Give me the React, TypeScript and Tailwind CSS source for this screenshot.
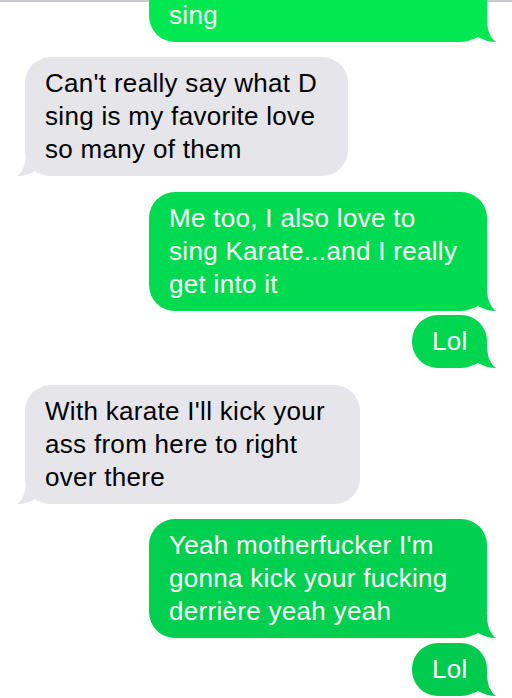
import React from "react";

type Msg = { from: "me" | "them"; lines: string[]; tone?: string; gap: string; w: string };

const messages: Msg[] = [
  { from: "them", lines: ["Can't really say what D", "sing is my favorite love", "so many of them"], gap: "mt-[15px]", w: "w-[323px]" },
  { from: "me", lines: ["Me too, I also love to", "sing Karate...and I really", "get into it"], tone: "#00da50", gap: "mt-[16px]", w: "w-[338px]" },
  { from: "me", lines: ["Lol"], tone: "#00d650", gap: "mt-[4px]", w: "w-[75px]" },
  { from: "them", lines: ["With karate I'll kick your", "ass from here to right", "over there"], gap: "mt-[17px]", w: "w-[335px]" },
  { from: "me", lines: ["Yeah motherfucker I'm", "gonna kick your fucking", "derrière yeah yeah"], tone: "#00cf50", gap: "mt-[15px]", w: "w-[338px]" },
  { from: "me", lines: ["Lol"], tone: "#00cb4f", gap: "mt-[5px]", w: "w-[75px]" },
];

function Tail({ from, color }: { from: "me" | "them"; color: string }) {
  if (from === "me") {
    return (
      <svg
        width="24"
        height="24"
        viewBox="0 0 24 24"
        className="absolute bottom-0 right-[-9px]"
        aria-hidden
      >
        <path d="M0 0 H15 C15 10 17 19 24 24 C18 24 11 22 6 19 C4 20 2 21 0 21 Z" fill={color} />
      </svg>
    );
  }
  return (
    <svg
      width="24"
      height="24"
      viewBox="0 0 24 24"
      className="absolute bottom-0 left-[-8px]"
      aria-hidden
    >
      <path d="M24 0 H9 C9 10 7 19 0 24 C6 24 13 22 18 19 C20 20 22 21 24 21 Z" fill={color} />
    </svg>
  );
}

function Bubble({ msg }: { msg: Msg }) {
  const mine = msg.from === "me";
  const color = mine ? msg.tone ?? "#00d850" : "#e5e5ea";
  return (
    <div className={`flex ${mine ? "justify-end pr-[25px]" : "justify-start pl-[25px]"} ${msg.gap}`}>
      <div
        className={`relative rounded-[26px] py-[10px] text-[26px] leading-[33px] tracking-[0.3px] ${msg.w} ${
          mine ? "pl-[20px] text-white" : "pl-[20px] text-black"
        }`}
        style={{ backgroundColor: color }}
      >
        <Tail from={msg.from} color={color} />
        <div className="relative whitespace-nowrap">
          {msg.lines.map((l) => (
            <div key={l}>{l}</div>
          ))}
        </div>
      </div>
    </div>
  );
}

export default function App() {
  return (
    <div className="h-[698px] w-[512px] overflow-hidden bg-white font-['Liberation_Sans',Arial,sans-serif]">
      <div className="h-[2px] bg-[#c9c9ce]" />
      <div className="flex justify-end pr-[25px]">
        <div className="relative -mt-[3px] w-[338px] rounded-b-[26px] bg-[#02e850] pl-[20px] pb-[10px] text-[26px] leading-[33px] tracking-[0.3px] text-white">
          <Tail from="me" color="#02e850" />
          <div className="relative">sing</div>
        </div>
      </div>
      {messages.map((m, i) => (
        <Bubble key={i} msg={m} />
      ))}
    </div>
  );
}
